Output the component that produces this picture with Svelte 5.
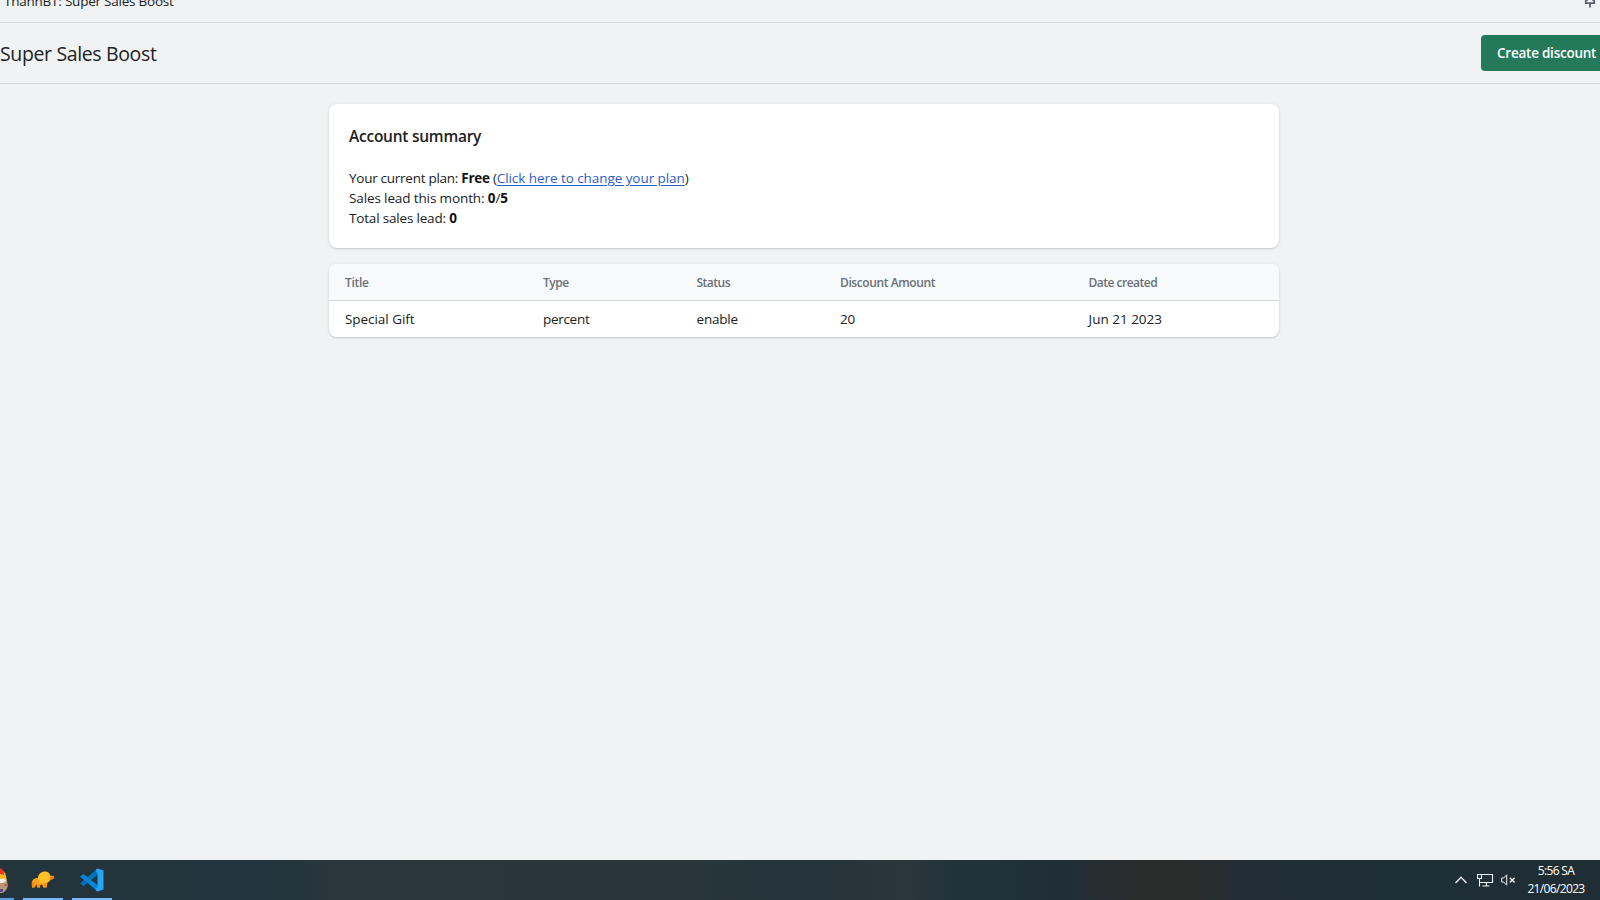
<script>
  const columns = [
    { label: 'Title', width: 198, tracking: -0.3 },
    { label: 'Type', width: 153.5, tracking: -0.5 },
    { label: 'Status', width: 143.5, tracking: -0.5 },
    { label: 'Discount Amount', width: 248.5, tracking: -0.4 },
    { label: 'Date created', width: 206.5, tracking: -0.5 }
  ];
  const rows = [['Special Gift', 'percent', 'enable', '20', 'Jun 21 2023']];
  const cellTracking = [-0.05, -0.3, -0.2, -0.2, 0];
</script>

<div class="screen">
  <div class="appbar">
    <span>ThannBT: Super Sales Boost</span>
    <svg class="pin" width="20" height="20" viewBox="0 0 20 20" fill="none" stroke="#5c5f72" stroke-width="1.8">
      <path d="M7 4h6M8 4v6L5.800 12v2.200h8.400V12L12 10V4M10 14v4.500" />
    </svg>
  </div>
  <header>
    <h1>Super Sales Boost</h1>
    <button>Create discount</button>
  </header>

  <main>
    <section class="card summary">
      <h2>Account summary</h2>
      <p class="plan">Your current plan: <b>Free</b> (<a href="#plan">Click here to change your plan</a>)</p>
      <p class="month">Sales lead this month: <b>0</b>/<b>5</b></p>
      <p class="total">Total sales lead: <b>0</b></p>
    </section>

    <section class="card">
      <table>
        <colgroup>
          {#each columns as column}<col style="width: {column.width}px" />{/each}
        </colgroup>
        <thead>
          <tr>{#each columns as column}<th style="letter-spacing: {column.tracking}px">{column.label}</th>{/each}</tr>
        </thead>
        <tbody>
          {#each rows as row}
            <tr>{#each row as cell, i}<td style="letter-spacing: {cellTracking[i]}px">{cell}</td>{/each}</tr>
          {/each}
        </tbody>
      </table>
    </section>
  </main>

  <footer>
    <div class="apps">
      <div class="task gnome">
        <svg width="8" height="26" viewBox="0 0 8 26">
          <path d="M0 1c3 1 5 3 6 7l1 5H0z" fill="#f6bd27" />
          <path d="M0 0c3 1 4 4 4 7L0 6z" fill="#e9352b" />
          <path d="M0 11c3-1 6 0 7 2 1 4 1 7-1 9-2 3-4 3-6 3z" fill="#b99a78" />
          <path d="M0 11c2-1 6-1 6 2L3 15H0z" fill="#f4eee7" />
          <path d="M4 16h4v2H4z" fill="#c9643e" />
          <path d="M0 21h3v3H0z" fill="#5c4c8e" />
        </svg>
      </div>
      <div class="task">
        <svg class="elephant" width="24" height="20" viewBox="0 0 24 20">
          <path d="M1.500 10.500C2.500 8.500 5 8 7.500 8l5 2 4 2-.8 5.500h-3.700l-.7-3-1.800.5-.5 2.500H6L5.300 14l-1.500 3.500H1L.6 13z" fill="#ffa51c" />
          <path d="M7 8c0-4 3.500-6.500 7-6.500 3 0 5 2 5.500 4.500l3-.3.8 2.300-3.500 1.500c-1.500 2.500-3.800 4-6.800 3.500C9.500 13 7 11.500 7 8z" fill="#ffc027" />
          <path d="M18.800 7.200l3.200-1.400 1.200 1-1.200 2.400-3.500.8z" fill="#f57c14" />
          <path d="M1 11.500l2.500 1-.5 5H1.200zM7 14l2 1-.5 2.500H6.200zM13 14l2.500-1-.3 4.500H13z" fill="#f98b18" />
        </svg>
      </div>
      <div class="task">
        <svg class="code" width="24" height="24" viewBox="0 0 24 24">
          <path d="M17.500.5V7L3.500 18 0 15.500z" fill="#0072b9" />
          <path d="M17.500 23.500V17L3.500 6 0 8.500z" fill="#0084d6" />
          <path d="M17.500.5L23.500 2.500v19l-6 2-1.800-1 1.800-4.500V6l-1.800-4.500z" fill="#25a7f3" />
        </svg>
      </div>
    </div>
    <div class="tray">
      <svg width="14" height="10" viewBox="0 0 14 10" fill="none" stroke="#eef2f3" stroke-width="1.300"><path d="M1.500 8L7 2.200 12.500 8" /></svg>
      <svg class="net" width="17" height="14" viewBox="0 0 17 14" fill="none" stroke="#eef2f3">
        <path d="M5 1.500h10.500v8H2.500V5.500M.5 1.500h4v4h-4zM2.500 9.500v4M9.500 9.500v3.500M5.500 13h7" stroke-width="1.100" />
      </svg>
      <svg class="vol" width="15" height="12" viewBox="0 0 15 12" fill="none" stroke="#eef2f3">
        <path d="M.7 4h2l3-3.200v10.400L2.700 8h-2z" /><path d="M8.800 3.700l4.800 4.800M13.600 3.700L8.800 8.500" stroke-width="1.300" />
      </svg>
      <div class="clock"><span class="time">5:56 SA</span><span class="date">21/06/2023</span></div>
    </div>
  </footer>
</div>

<style>
  :global(body) { margin: 0; overflow: hidden; background: #f1f2f4; }
  .screen {
    width: 1600px; height: 900px; overflow: hidden; display: flex; flex-direction: column;
    background: #f1f2f4; color: #202223; font: 13.500px/20px "Open Sans", sans-serif;
  }
  h1, h2, p { margin: 0; }
  .appbar {
    box-sizing: border-box; height: 23px; flex: none; border-bottom: 1px solid #d9dbdd;
    display: flex; justify-content: space-between; align-items: flex-start; padding-left: 4px;
    letter-spacing: -0.230px;
  }
  .appbar span { margin-top: -9px; }
  .pin { margin-top: -11px; }
  header {
    box-sizing: border-box; height: 61px; flex: none; border-bottom: 1px solid #d9dbdd;
    display: flex; justify-content: space-between; align-items: center;
  }
  h1 { padding-top: 2px; font-size: 19.500px; line-height: 28px; font-weight: 400; letter-spacing: -0.360px; }
  button {
    box-sizing: border-box; width: 119px; height: 36px; padding: 0 0 0 16px; border: 0; border-radius: 4px 0 0 4px;
    background: #24795a; color: #fff; font: 600 13.500px/20px "Open Sans", sans-serif;
    text-align: left; white-space: nowrap; letter-spacing: -0.240px;
  }
  main { flex: 1; width: 950px; margin-left: 329px; padding-top: 20px; display: flex; flex-direction: column; gap: 16px; }
  .card { border-radius: 8px; background: #fff; overflow: hidden; box-shadow: 0 0 5px rgba(23, 24, 24, .05), 0 1px 2px rgba(0, 0, 0, .15); }
  .summary { box-sizing: border-box; height: 144px; padding: 20px; }
  h2 { font-size: 15.500px; line-height: 24px; font-weight: 600; margin-bottom: 20px; letter-spacing: -0.250px; }
  p { white-space: nowrap; letter-spacing: -0.120px; }
  .plan { letter-spacing: -0.270px; }
  .plan a { letter-spacing: -0.060px; }
  .total { letter-spacing: -0.180px; }
  b { font-weight: 700; color: #111; }
  a { color: #2c5dc9; text-underline-offset: 2px; }
  table { width: 950px; table-layout: fixed; border-collapse: separate; border-spacing: 0; text-align: left; }
  th, td { box-sizing: border-box; height: 36px; padding: 0 16px; white-space: nowrap; }
  th { height: 37px; padding-top: 2px; border-bottom: 1px solid #d5d9dc; background: #f9fafb; color: #6a7078; font-size: 12px; line-height: 16px; font-weight: 600; }
  footer {
    height: 40px; flex: none; display: flex; justify-content: space-between;
    background: linear-gradient(90deg, #23343b 0, #22343d 270px, #29363b 330px, #28363a 680px, #25343a 800px, #29363a 910px, #22323a 960px, #202f37 1070px, #2b2d2d 1130px, #2b2d2d 1190px, #222e35 1240px, #1e2e35 1400px, #1f2e34 1600px);
  }
  .apps { display: flex; gap: 9px; }
  .task { box-sizing: border-box; width: 40px; height: 40px; border-bottom: 2px solid #76b9ff; display: flex; align-items: center; justify-content: center; }
  .elephant, .code { margin-top: 2px; }
  .gnome { width: 14px; justify-content: flex-start; border-color: #5c9fe0; padding-top: 4px; }
  .tray { display: flex; align-items: center; padding-right: 14px; }
  .net { margin-left: 9px; }
  .vol { margin-left: 7px; }
  .clock { width: 60px; margin-left: 10px; display: flex; flex-direction: column; align-items: center; color: #fff; font-size: 12px; line-height: 18px; letter-spacing: -0.650px; white-space: nowrap; }
</style>
